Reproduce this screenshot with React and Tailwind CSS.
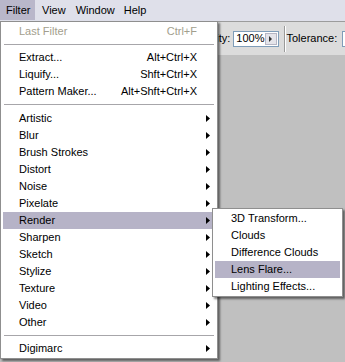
import React from "react";

const Arrow = () => (
  <svg width="4" height="7" viewBox="0 0 4 7" className="block">
    <path d="M0 0 L4 3.5 L0 7 Z" fill="#000" />
  </svg>
);

const Item = ({ label, shortcut, sub, active, disabled }) => (
  <div
    className={`h-[17px] flex items-center pl-[16px] pr-[5px] ${active ? "bg-[#b6b3c7]" : ""} ${disabled ? "text-[#a29e8d]" : "text-black"}`}
  >
    <span className="flex-1 whitespace-nowrap">{label}</span>
    {shortcut && <span className="whitespace-nowrap mr-[13px]">{shortcut}</span>}
    {sub && <Arrow />}
  </div>
);

const Sep = ({ h = 9 }) => (
  <div className={`flex flex-col justify-center px-[1px] ${h === 9 ? "h-[9px]" : "h-[10px]"}`}>
    <div className="h-[1px] bg-[#a7a6aa]" />
    <div className="h-[1px] bg-white" />
  </div>
);

export default function App() {
  const subs = ["Artistic", "Blur", "Brush Strokes", "Distort", "Noise", "Pixelate", "Render", "Sharpen", "Sketch", "Stylize", "Texture", "Video", "Other"];
  return (
    <div
      className="w-[345px] h-[362px] relative overflow-hidden bg-[#c0c0c0] text-[11px] leading-none"
      style={{ fontFamily: '"Liberation Sans", Arial, sans-serif' }}
    >
      {/* menubar */}
      <div className="h-[21px] bg-[#dfe0ea] flex items-stretch text-black">
        <div className="w-[35px] h-[20px] bg-[#b9b7ca] flex items-center pl-[6px]">Filter</div>
        <div className="h-[20px] flex items-center pl-[7px] pr-[10px]">View</div>
        <div className="h-[20px] flex items-center pr-[9px]">Window</div>
        <div className="h-[20px] flex items-center">Help</div>
      </div>
      {/* toolbar */}
      <div className="h-[34px] bg-[#dcdcdc] border-t border-[#9c9c9c] flex items-center pl-[190px] text-black overflow-hidden">
        <span className="whitespace-nowrap">Opacity:</span>
        <div className="ml-[3px] w-[47px] h-[16px] bg-white border border-[#7f9db9] flex items-center justify-between pl-[2px] pr-[1px]">
          <span>100%</span>
          <div className="w-[12px] h-[12px] bg-[#e4e4ea] border border-[#b6b6c4] flex items-center justify-center">
            <svg width="3" height="6" viewBox="0 0 3 6"><path d="M0 0 L3 3 L0 6 Z" fill="#333" /></svg>
          </div>
        </div>
        <div className="ml-[5px] h-[26px] w-[2px] flex">
          <div className="w-[1px] bg-[#9a9a9a]" />
          <div className="w-[1px] bg-white" />
        </div>
        <span className="ml-[1px] whitespace-nowrap">Tolerance:</span>
        <div className="ml-[5px] w-[30px] h-[16px] shrink-0 bg-white border border-[#7f9db9] pl-[2px] flex items-center">3</div>
      </div>

      {/* Filter dropdown */}
      <div className="absolute left-0 top-[21px] w-[218px] bg-white border border-[#8f8f8f] shadow-[2px_2px_2px_rgba(0,0,0,0.5)] py-[1px] px-[2px]">
        <Item label="Last Filter" shortcut="Ctrl+F" disabled />
        <Sep />
        <Item label="Extract..." shortcut="Alt+Ctrl+X" />
        <Item label="Liquify..." shortcut="Shft+Ctrl+X" />
        <Item label="Pattern Maker..." shortcut="Alt+Shft+Ctrl+X" />
        <Sep h={10} />
        {subs.map((s) => (
          <Item key={s} label={s} sub active={s === "Render"} />
        ))}
        <Sep />
        <Item label="Digimarc" sub />
      </div>

      {/* Render submenu */}
      <div className="absolute left-[212px] top-[208px] w-[131px] bg-white border border-[#8f8f8f] shadow-[2px_2px_2px_rgba(0,0,0,0.5)] py-[1px] px-[2px]">
        {["3D Transform...", "Clouds", "Difference Clouds", "Lens Flare...", "Lighting Effects..."].map((s) => (
          <Item key={s} label={s} active={s === "Lens Flare..."} />
        ))}
      </div>
    </div>
  );
}
